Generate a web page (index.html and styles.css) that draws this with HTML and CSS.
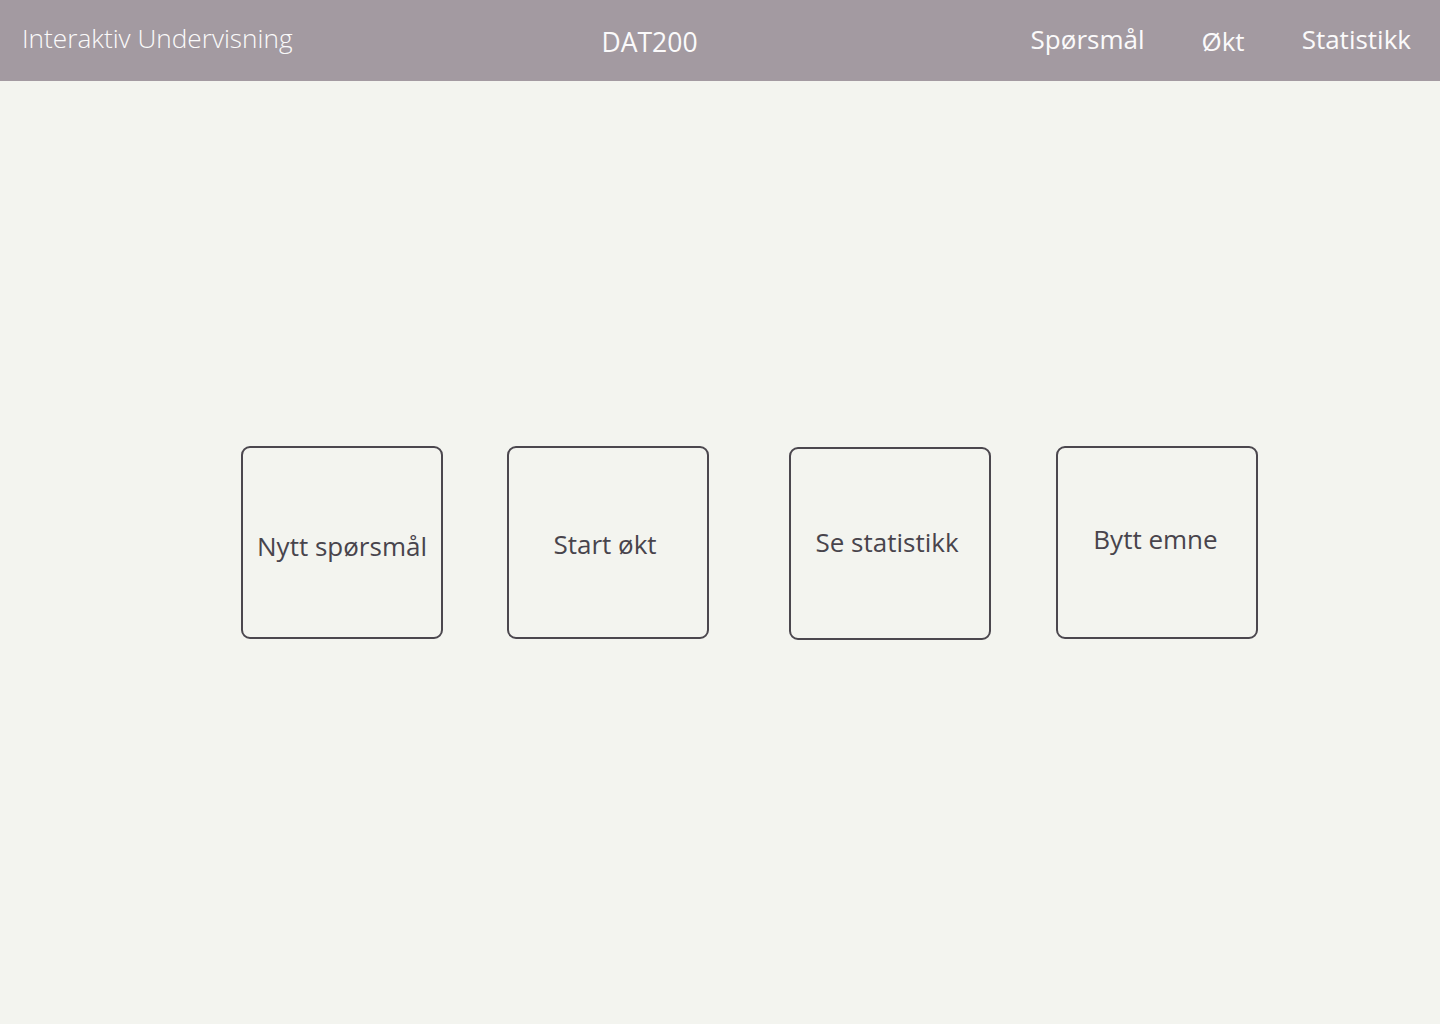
FILE: index.html
```html
<!DOCTYPE html>
<html lang="no">
<head>
<meta charset="utf-8">
<title>Interaktiv Undervisning</title>
<link rel="stylesheet" href="styles.css">
</head>
<body>
<header class="topbar">
  <div class="brand">Interaktiv Undervisning</div>
  <div class="course">DAT200</div>
  <nav class="nav">
    <a class="nav-link" href="#">Spørsmål</a>
    <a class="nav-link nav-okt" href="#">Økt</a>
    <a class="nav-link" href="#">Statistikk</a>
  </nav>
</header>
<main class="main">
  <div class="tiles">
    <button class="tile tile-1"><span>Nytt spørsmål</span></button>
    <button class="tile tile-2"><span>Start økt</span></button>
    <button class="tile tile-3"><span>Se statistikk</span></button>
    <button class="tile tile-4"><span>Bytt emne</span></button>
  </div>
</main>
</body>
</html>
```
FILE: styles.css
```css
* { box-sizing: border-box; }
html, body { margin: 0; padding: 0; }
body {
  background: #f3f4ef;
  font-family: "Open Sans", "Noto Sans", sans-serif;
  width: 1440px;
  height: 1024px;
  overflow: hidden;
}
.topbar {
  height: 81px;
  background: #a39aa1;
  display: flex;
  align-items: flex-start;
  padding: 0 29px 0 22px;
  color: #fbfafb;
}
.brand {
  font-size: 26.2px;
  font-weight: 300;
  margin-top: 20px;
}
.course {
  font-size: 26.5px;
  font-weight: 400;
  margin-left: 309px;
  margin-top: 24px;
}
.nav {
  margin-left: auto;
  display: flex;
  gap: 57px;
  margin-top: 21px;
}
.nav-link {
  color: #fbfafb;
  text-decoration: none;
  font-size: 26px;
  font-weight: 400;
}
.nav-okt { margin-top: 2px; }
.main {
  padding-top: 365px;
}
.tiles {
  display: flex;
  padding-left: 241px;
}
.tile {
  width: 202px;
  height: 193px;
  border: 2px solid #4b474e;
  border-radius: 9px;
  background: transparent;
  font-family: inherit;
  font-size: 26px;
  color: #48444c;
  display: flex;
  align-items: center;
  justify-content: center;
  padding: 0;
}
.tile-1 span { margin-top: 6px; }
.tile-2 { margin-left: 64px; }
.tile-2 span { margin-top: 2px; margin-left: -6px; }
.tile-3 { margin-left: 80px; margin-top: 1px; }
.tile-3 span { margin-top: -4px; margin-left: -6px; }
.tile-4 { margin-left: 65px; }
.tile-4 span { margin-top: -7px; margin-left: -3px; }
```
